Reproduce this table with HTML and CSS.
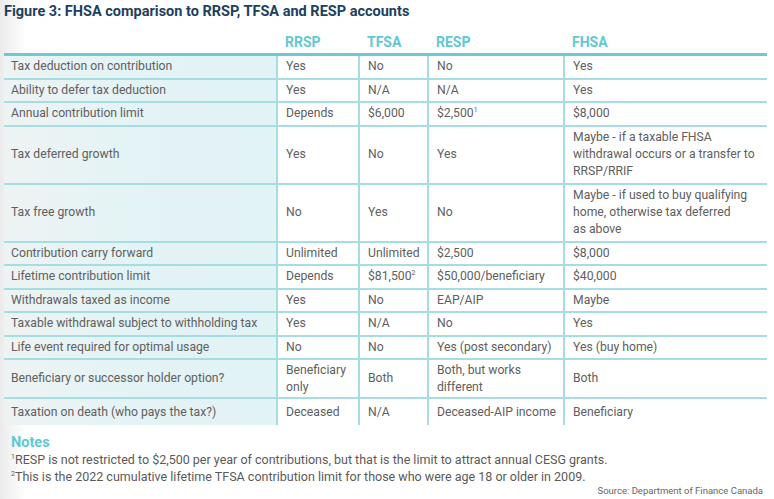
FILE: index.html
```html
<!DOCTYPE html>
<html>
<head>
<meta charset="utf-8">
<link rel="stylesheet" href="styles.css">
</head>
<body>
<div class="page">
  <h1 class="title">Figure 3: FHSA comparison to RRSP, TFSA and RESP accounts</h1>
  <table class="cmp">
    <colgroup>
      <col class="c1"><col class="c2"><col class="c3"><col class="c4"><col class="c5">
    </colgroup>
    <thead>
      <tr><th></th><th>RRSP</th><th>TFSA</th><th>RESP</th><th>FHSA</th></tr>
    </thead>
    <tbody>
      <tr class="r1"><td>Tax deduction on contribution</td><td>Yes</td><td>No</td><td>No</td><td>Yes</td></tr>
      <tr class="r1"><td>Ability to defer tax deduction</td><td>Yes</td><td>N/A</td><td>N/A</td><td>Yes</td></tr>
      <tr class="r1"><td>Annual contribution limit</td><td>Depends</td><td>$6,000</td><td>$2,500<sup>1</sup></td><td>$8,000</td></tr>
      <tr class="r3"><td>Tax deferred growth</td><td>Yes</td><td>No</td><td>Yes</td><td>Maybe - if a taxable FHSA withdrawal occurs or a transfer to RRSP/RRIF</td></tr>
      <tr class="r3"><td>Tax free growth</td><td>No</td><td>Yes</td><td>No</td><td>Maybe - if used to buy qualifying home, otherwise tax deferred as&nbsp;above</td></tr>
      <tr class="r1"><td>Contribution carry forward</td><td>Unlimited</td><td>Unlimited</td><td>$2,500</td><td>$8,000</td></tr>
      <tr class="r1"><td>Lifetime contribution limit</td><td>Depends</td><td>$81,500<sup>2</sup></td><td>$50,000/beneficiary</td><td>$40,000</td></tr>
      <tr class="r1"><td>Withdrawals taxed as income</td><td>Yes</td><td>No</td><td>EAP/AIP</td><td>Maybe</td></tr>
      <tr class="r1"><td>Taxable withdrawal subject to withholding tax</td><td>Yes</td><td>N/A</td><td>No</td><td>Yes</td></tr>
      <tr class="r1"><td>Life event required for optimal usage</td><td>No</td><td>No</td><td>Yes (post secondary)</td><td>Yes (buy home)</td></tr>
      <tr class="r2"><td>Beneficiary or successor holder option?</td><td>Beneficiary only</td><td>Both</td><td>Both, but works different</td><td>Both</td></tr>
      <tr class="r4 last"><td>Taxation on death (who pays the tax?)</td><td>Deceased</td><td>N/A</td><td class="nw">Deceased-AIP income</td><td>Beneficiary</td></tr>
    </tbody>
  </table>
  <div class="notes">
    <h2 class="notes-title">Notes</h2>
    <p class="note"><sup>1</sup>RESP is not restricted to $2,500 per year of contributions, but that is the limit to attract annual CESG grants.</p>
    <p class="note"><sup>2</sup>This is the 2022 cumulative lifetime TFSA contribution limit for those who were age 18 or older in 2009.</p>
  </div>
  <div class="source">Source: Department of Finance Canada</div>
</div>
</body>
</html>
```
FILE: styles.css
```css
html, body {
  margin: 0;
  padding: 0;
}
body {
  width: 774px;
  height: 499px;
  overflow: hidden;
  font-family: Roboto, "Liberation Sans", sans-serif;
  color: #606060;
  background: linear-gradient(to right, #ebebeb 0px, #ffffff 26px);
}
.page {
  padding: 4px 7px 0 4px;
}
.title {
  margin: 0;
  font-size: 14.5px;
  font-weight: 700;
  color: #1e3f5e;
  line-height: 16px;
  height: 30px;
}
.cmp {
  width: 763px;
  border-collapse: collapse;
  table-layout: fixed;
  font-size: 12.2px;
  line-height: 17px;
}
.c1 { width: 273px; }
.c2 { width: 82px; }
.c3 { width: 69px; }
.c4 { width: 136px; }
.c5 { width: 203px; }
.cmp th {
  text-align: left;
  font-size: 14px;
  font-weight: 700;
  color: #62c8d3;
  padding: 0 0 2px 8px;
  height: 16px;
  vertical-align: bottom;
  border-bottom: 3px solid #6dc9d3;
}
.cmp td {
  padding: 0 4px 0 8px;
  border-bottom: 2px solid #a6dde3;
  border-left: 2px solid #a6dde3;
  vertical-align: middle;
  background: #ffffff;
}
.cmp td:first-child {
  border-left: none;
  padding-left: 7px;
  background: linear-gradient(to right, #eef3f3 0px, #e4f3f5 120px, #e2f3f5 273px);
}
.cmp td.nw {
  white-space: nowrap;
}
.cmp tr.last td {
  border-bottom: none;
}
.r1 td { height: 21.5px; }
.r2 td { height: 37px; }
.r3 td { height: 56px; }
.r4 td { height: 26px; }
.cmp sup, .note sup {
  font-size: 7px;
  line-height: 0;
  vertical-align: 5px;
}
.notes {
  margin-top: 10px;
}
.notes-title {
  margin: 0 0 0 7px;
  font-size: 14.5px;
  font-weight: 700;
  color: #62c8d3;
  line-height: 16px;
}
.note {
  margin: 0 0 0 7px;
  font-size: 12.5px;
  line-height: 17px;
  color: #5a5a5a;
}
.source {
  text-align: right;
  font-size: 9.5px;
  line-height: 12px;
  color: #666;
  margin-top: 0;
  padding-right: 4px;
}
```
